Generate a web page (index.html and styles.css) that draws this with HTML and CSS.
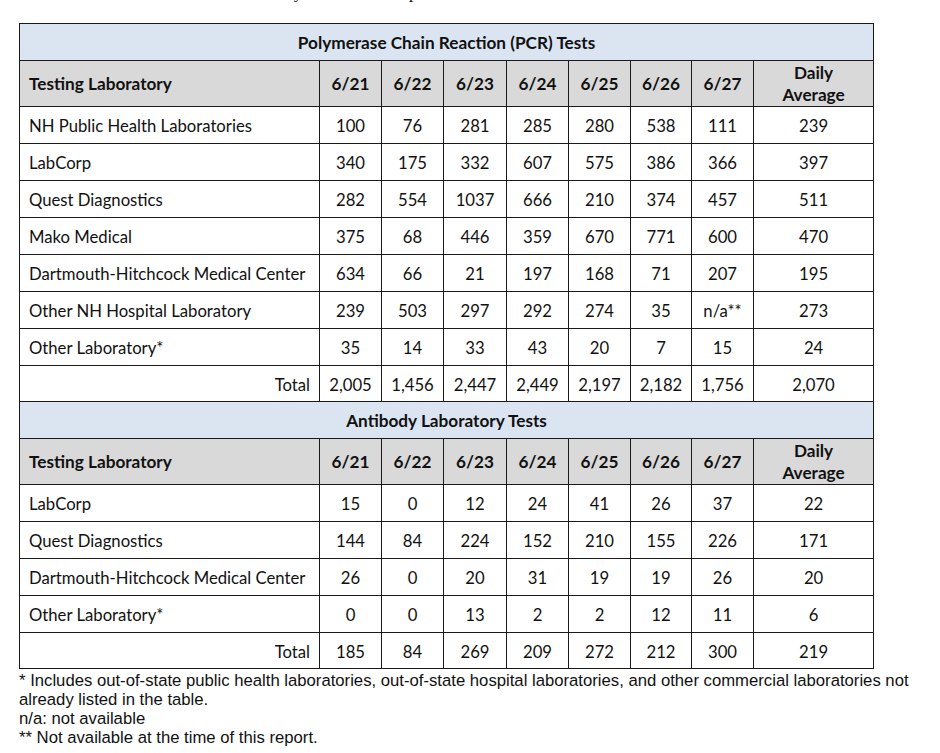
FILE: index.html
```html
<!DOCTYPE html>
<html>
<head>
<meta charset="utf-8">
<link rel="stylesheet" href="styles.css">
</head>
<body>
<div class="page">
  <div class="cut"><span class="cut-line">Results by test date and report</span></div>
  <table class="tests">
    <colgroup>
      <col class="c-lab"><col class="c-d"><col class="c-d"><col class="c-d3"><col class="c-d"><col class="c-d"><col class="c-d7"><col class="c-d"><col class="c-avg">
    </colgroup>
    <tbody>
      <tr class="title-row"><td colspan="9">Polymerase Chain Reaction (PCR) Tests</td></tr>
      <tr class="head-row"><td class="lab">Testing Laboratory</td><td>6/21</td><td>6/22</td><td>6/23</td><td>6/24</td><td>6/25</td><td>6/26</td><td>6/27</td><td>Daily<br>Average</td></tr>
      <tr><td class="lab">NH Public Health Laboratories</td><td>100</td><td>76</td><td>281</td><td>285</td><td>280</td><td>538</td><td>111</td><td>239</td></tr>
      <tr><td class="lab">LabCorp</td><td>340</td><td>175</td><td>332</td><td>607</td><td>575</td><td>386</td><td>366</td><td>397</td></tr>
      <tr><td class="lab">Quest Diagnostics</td><td>282</td><td>554</td><td>1037</td><td>666</td><td>210</td><td>374</td><td>457</td><td>511</td></tr>
      <tr><td class="lab">Mako Medical</td><td>375</td><td>68</td><td>446</td><td>359</td><td>670</td><td>771</td><td>600</td><td>470</td></tr>
      <tr><td class="lab">Dartmouth-Hitchcock Medical Center</td><td>634</td><td>66</td><td>21</td><td>197</td><td>168</td><td>71</td><td>207</td><td>195</td></tr>
      <tr><td class="lab">Other NH Hospital Laboratory</td><td>239</td><td>503</td><td>297</td><td>292</td><td>274</td><td>35</td><td>n/a**</td><td>273</td></tr>
      <tr><td class="lab">Other Laboratory*</td><td>35</td><td>14</td><td>33</td><td>43</td><td>20</td><td>7</td><td>15</td><td>24</td></tr>
      <tr class="total-row"><td class="total">Total</td><td>2,005</td><td>1,456</td><td>2,447</td><td>2,449</td><td>2,197</td><td>2,182</td><td>1,756</td><td>2,070</td></tr>
      <tr class="title-row"><td colspan="9">Antibody Laboratory Tests</td></tr>
      <tr class="head-row head-row2"><td class="lab">Testing Laboratory</td><td>6/21</td><td>6/22</td><td>6/23</td><td>6/24</td><td>6/25</td><td>6/26</td><td>6/27</td><td>Daily<br>Average</td></tr>
      <tr><td class="lab">LabCorp</td><td>15</td><td>0</td><td>12</td><td>24</td><td>41</td><td>26</td><td>37</td><td>22</td></tr>
      <tr><td class="lab">Quest Diagnostics</td><td>144</td><td>84</td><td>224</td><td>152</td><td>210</td><td>155</td><td>226</td><td>171</td></tr>
      <tr><td class="lab">Dartmouth-Hitchcock Medical Center</td><td>26</td><td>0</td><td>20</td><td>31</td><td>19</td><td>19</td><td>26</td><td>20</td></tr>
      <tr><td class="lab">Other Laboratory*</td><td>0</td><td>0</td><td>13</td><td>2</td><td>2</td><td>12</td><td>11</td><td>6</td></tr>
      <tr class="total-row"><td class="total">Total</td><td>185</td><td>84</td><td>269</td><td>209</td><td>272</td><td>212</td><td>300</td><td>219</td></tr>
    </tbody>
  </table>
  <div class="notes">
    <p>* Includes out-of-state public health laboratories, out-of-state hospital laboratories, and other commercial laboratories not<br>already listed in the table.</p>
    <p>n/a: not available</p>
    <p>** Not available at the time of this report.</p>
  </div>
</div>
</body>
</html>
```
FILE: styles.css
```css
html, body {
  margin: 0;
  padding: 0;
  background: #ffffff;
}
.page {
  width: 940px;
  height: 753px;
  overflow: hidden;
  padding-left: 19px;
  box-sizing: border-box;
}
.cut {
  height: 23px;
  overflow: hidden;
  position: relative;
}
.cut-line {
  display: block;
  margin-top: -17px;
  padding-left: 212px;
  font-family: "Liberation Serif", serif;
  font-size: 17px;
  line-height: 20px;
  color: #111;
  white-space: nowrap;
}
.tests {
  border-collapse: collapse;
  table-layout: fixed;
  width: 855px;
  font-family: Lato, "Open Sans", sans-serif;
  font-size: 16.7px;
  color: #111;
}
.c-lab { width: 300px; }
.c-d { width: 62px; }
.c-d3 { width: 63px; }
.c-d7 { width: 61px; }
.c-avg { width: 120px; }
.tests td {
  border: 1px solid #1a1a1a;
  text-align: center;
  padding: 2px 0 0 0;
  height: 34px;
  line-height: 20px;
  white-space: nowrap;
}
.tests td.lab {
  text-align: left;
  padding-left: 9px;
}
.tests td.total {
  text-align: right;
  padding-right: 9px;
}
.title-row td {
  background: #dbe5f1;
  font-weight: bold;
  font-size: 17.2px;
  height: 34px;
}
.tests .head-row td {
  background: #d9d9d9;
  font-weight: bold;
  font-size: 17.2px;
  padding-top: 1px;
  height: 44px;
  line-height: 22px;
}
.tests .head-row2 td {
  height: 43px;
}
.total-row td {
  height: 33px;
}
.notes {
  font-family: "Liberation Sans", Arial, sans-serif;
  font-size: 16.7px;
  line-height: 19px;
  color: #111;
  padding-top: 2px;
}
.notes p {
  margin: 0;
}
```
